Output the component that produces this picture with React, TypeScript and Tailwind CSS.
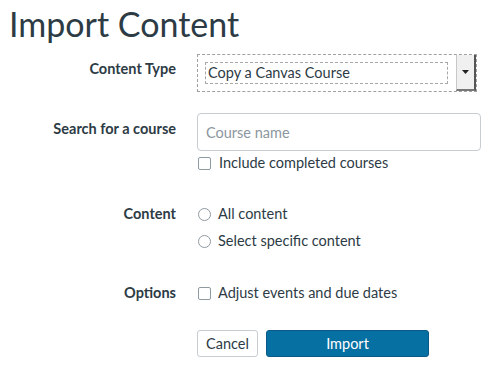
export default function App() {
  const font = { fontFamily: 'Lato, "Open Sans", sans-serif' };

  return (
    <div className="w-[500px] h-[387px] bg-white text-[#2d3b45] overflow-hidden" style={font}>
      <h1 className="pl-[9px] pt-[3px] text-[34px] leading-[42px] font-normal">Import Content</h1>

      <div className="mt-[9px] flex">
        <div className="w-[176px] pt-[5px] text-right text-[14.5px] font-bold leading-[20px]">Content Type</div>
        <div className="ml-[21px] flex h-[38px] w-[280px] border border-dashed border-[#a0a0a0]">
          <div className="m-[7px] mr-[8px] flex flex-1 items-center border border-dashed border-[#a8a8a8] px-[2px] text-[14.5px] leading-[18px]">
            Copy a Canvas Course
          </div>
          <div className="flex w-[20px] items-center justify-center border-l border-[#c8c8c8] border-r-2 border-b-2 border-r-[#555] border-b-[#777] bg-[#f0f0f0]">
            <svg width="7" height="4" viewBox="0 0 7 4">
              <path d="M0 0h7L3.5 4z" fill="#222" />
            </svg>
          </div>
        </div>
      </div>

      <div className="mt-[21px] flex">
        <div className="w-[176px] pt-[6px] text-right text-[14.5px] font-bold leading-[20px]">Search for a course</div>
        <div className="ml-[21px] flex flex-col">
          <input
            placeholder="Course name"
            className="h-[38px] w-[284px] rounded-[4px] border border-[#c7cdd1] px-[8px] text-[14.5px] outline-none placeholder:text-[#8b969e]"
            style={font}
          />
          <label className="mt-[3px] flex items-center gap-[8px] text-[14.5px] leading-[18px]">
            <span className="ml-[1px] h-[13px] w-[13px] rounded-[2px] border border-[#8f9aa1]" />
            Include completed courses
          </label>
        </div>
      </div>

      <div className="mt-[33px] flex">
        <div className="w-[176px] text-right text-[14.5px] font-bold leading-[18px]">Content</div>
        <div className="ml-[21px] flex flex-col gap-[9px]">
          <label className="flex items-center gap-[7px] text-[14.5px] leading-[18px]">
            <span className="ml-[1px] h-[13px] w-[13px] rounded-full border border-[#8f9aa1]" />
            All content
          </label>
          <label className="flex items-center gap-[7px] text-[14.5px] leading-[18px]">
            <span className="ml-[1px] h-[13px] w-[13px] rounded-full border border-[#8f9aa1]" />
            Select specific content
          </label>
        </div>
      </div>

      <div className="mt-[34px] flex">
        <div className="w-[176px] text-right text-[14.5px] font-bold leading-[18px]">Options</div>
        <label className="ml-[21px] flex items-center gap-[7px] text-[14.5px] leading-[18px]">
          <span className="ml-[1px] h-[13px] w-[13px] rounded-[2px] border border-[#8f9aa1]" />
          Adjust events and due dates
        </label>
      </div>

      <div className="ml-[197px] mt-[28px] flex gap-[8px]">
        <button className="h-[27px] w-[61px] rounded-[3px] border border-[#c7cdd1] bg-white text-[14.5px] text-[#2d3b45]" style={font}>
          Cancel
        </button>
        <button className="h-[27px] w-[163px] rounded-[3px] border border-[#0a5a85] bg-[#0770a3] text-[14.5px] text-white" style={font}>
          Import
        </button>
      </div>
    </div>
  );
}
